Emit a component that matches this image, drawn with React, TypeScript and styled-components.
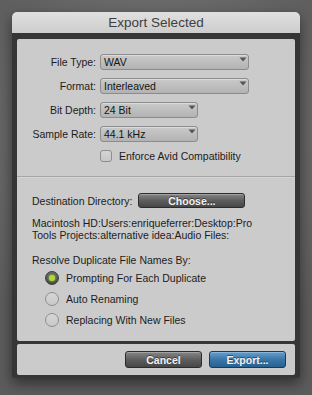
import React from 'react';
import styled, { createGlobalStyle } from 'styled-components';

const Global = createGlobalStyle`
  html, body { margin: 0; padding: 0; }
  body {
    width: 312px;
    height: 395px;
    overflow: hidden;
    background: radial-gradient(ellipse 70% 60% at 50% 35%, #767676 0%, #6a6a6a 55%, #5c5c5c 100%);
    font-family: "Liberation Sans", Arial, Helvetica, sans-serif;
    font-size: 10.5px;
    color: #1c1c1c;
  }
`;

const Page = styled.div`
  padding: 12px 12px 0 12px;
`;

const Window = styled.div`
  width: 288px;
  border-radius: 5px 5px 3px 3px;
  background: #363636;
  box-shadow: 0 5px 14px rgba(0, 0, 0, 0.5);
  overflow: hidden;
`;

const TitleBar = styled.div`
  height: 21px;
  display: flex;
  align-items: center;
  justify-content: center;
  background: linear-gradient(#e0e0e0, #cdcdcd);
  color: #3e3e3e;
  font-size: 13.5px;
`;

const Body = styled.div`
  padding: 6px 5px 3px 5px;
  display: flex;
  flex-direction: column;
  gap: 3px;
`;

const Panel = styled.div`
  background: #cbcbcb;
  border-radius: 2px;
`;

const MainPanel = styled(Panel)`
  padding: 15px 0 14px 0;
`;

const Form = styled.div`
  display: grid;
  grid-template-columns: 79px auto;
  column-gap: 4px;
  row-gap: 8px;
  align-items: center;
`;

const Label = styled.div`
  text-align: right;
  white-space: nowrap;
`;

const Select = styled.div<{ $w: number }>`
  width: ${(p) => p.$w}px;
  height: 16px;
  box-sizing: border-box;
  border: 1px solid #8c8c8c;
  border-radius: 3px;
  background: linear-gradient(#c9c9c9, #b3b3b3);
  box-shadow: inset 0 1px 0 rgba(255, 255, 255, 0.35);
  display: flex;
  align-items: flex-start;
  justify-content: space-between;
  padding: 0 1px 0 3px;
  line-height: 14px;
  color: #141414;
`;

const Arrow = styled.svg`
  margin-top: 2px;
  flex: none;
`;

const CheckRow = styled.div`
  grid-column: 2;
  display: flex;
  align-items: center;
  gap: 7px;
  height: 12px;
`;

const Checkbox = styled.div`
  width: 12px;
  height: 12px;
  box-sizing: border-box;
  border: 1px solid #8e8e8e;
  border-radius: 3px;
  background: linear-gradient(#d4d4d4, #c8c8c8);
`;

const Separator = styled.div`
  height: 1px;
  margin-top: 14px;
  background: #a6a6a6;
  box-shadow: 0 1px 0 #d6d6d6;
`;

const Section = styled.div`
  padding: 16px 15px 0 15px;
`;

const DestRow = styled.div`
  display: flex;
  align-items: center;
  gap: 6px;
`;

const Button = styled.div<{ $w: number; $h: number; $blue?: boolean }>`
  width: ${(p) => p.$w}px;
  height: ${(p) => p.$h}px;
  box-sizing: border-box;
  border-radius: 3px;
  display: flex;
  align-items: center;
  justify-content: center;
  font-weight: bold;
  font-size: 10.5px;
  color: #f2f2f2;
  text-shadow: 0 -1px 0 rgba(0, 0, 0, 0.45);
  border: 1px solid ${(p) => (p.$blue ? '#1c3a58' : '#2c2c2c')};
  background: ${(p) =>
    p.$blue
      ? 'linear-gradient(#64a0cf, #3a77a8 50%, #27618f)'
      : 'linear-gradient(#868686, #5e5e5e 50%, #474747)'};
  box-shadow: inset 0 1px 0 rgba(255, 255, 255, 0.25);
`;

const PathText = styled.div`
  margin-top: 9px;
  line-height: 12px;
`;

const Heading = styled.div`
  margin-top: 13px;
  line-height: 12px;
`;

const RadioList = styled.div`
  margin-top: 5px;
  padding-left: 13px;
  display: flex;
  flex-direction: column;
  gap: 7px;
`;

const RadioRow = styled.div`
  display: flex;
  align-items: center;
  gap: 7px;
  height: 14px;
`;

const Radio = styled.div<{ $on?: boolean }>`
  width: 14px;
  height: 14px;
  box-sizing: border-box;
  border-radius: 50%;
  display: flex;
  align-items: center;
  justify-content: center;
  border: 1px solid ${(p) => (p.$on ? '#3a3a3a' : '#8e8e8e')};
  background: ${(p) =>
    p.$on ? 'linear-gradient(#6a6a6a, #4a4a4a)' : 'linear-gradient(#d6d6d6, #c9c9c9)'};
`;

const Dot = styled.div`
  width: 6px;
  height: 6px;
  border-radius: 50%;
  background: #a8dc2c;
  box-shadow: 0 0 2px #b9f040;
`;

const ButtonPanel = styled(Panel)`
  height: 31px;
  box-sizing: border-box;
  padding: 7px 9px 0 0;
  display: flex;
  justify-content: flex-end;
  gap: 7px;
`;

const DropArrow = () => (
  <Arrow width="8" height="5" viewBox="0 0 8 5">
    <path d="M0.5 0.5 L7.5 0.5 L4 4.5 Z" fill="#555" />
  </Arrow>
);

export default function App() {
  return (
    <>
      <Global />
      <Page>
        <Window>
          <TitleBar>Export Selected</TitleBar>
          <Body>
            <MainPanel>
              <Form>
                <Label>File Type:</Label>
                <Select $w={149}>
                  <span>WAV</span>
                  <DropArrow />
                </Select>
                <Label>Format:</Label>
                <Select $w={149}>
                  <span>Interleaved</span>
                  <DropArrow />
                </Select>
                <Label>Bit Depth:</Label>
                <Select $w={98}>
                  <span>24 Bit</span>
                  <DropArrow />
                </Select>
                <Label>Sample Rate:</Label>
                <Select $w={98}>
                  <span>44.1 kHz</span>
                  <DropArrow />
                </Select>
                <CheckRow>
                  <Checkbox />
                  <span>Enforce Avid Compatibility</span>
                </CheckRow>
              </Form>
              <Separator />
              <Section>
                <DestRow>
                  <span>Destination Directory:</span>
                  <Button $w={107} $h={15}>Choose...</Button>
                </DestRow>
                <PathText>
                  Macintosh HD:Users:enriqueferrer:Desktop:Pro
                  <br />
                  Tools Projects:alternative idea:Audio Files:
                </PathText>
                <Heading>Resolve Duplicate File Names By:</Heading>
                <RadioList>
                  <RadioRow>
                    <Radio $on>
                      <Dot />
                    </Radio>
                    <span>Prompting For Each Duplicate</span>
                  </RadioRow>
                  <RadioRow>
                    <Radio />
                    <span>Auto Renaming</span>
                  </RadioRow>
                  <RadioRow>
                    <Radio />
                    <span>Replacing With New Files</span>
                  </RadioRow>
                </RadioList>
              </Section>
            </MainPanel>
            <ButtonPanel>
              <Button $w={77} $h={17}>Cancel</Button>
              <Button $w={77} $h={17} $blue>Export...</Button>
            </ButtonPanel>
          </Body>
        </Window>
      </Page>
    </>
  );
}
